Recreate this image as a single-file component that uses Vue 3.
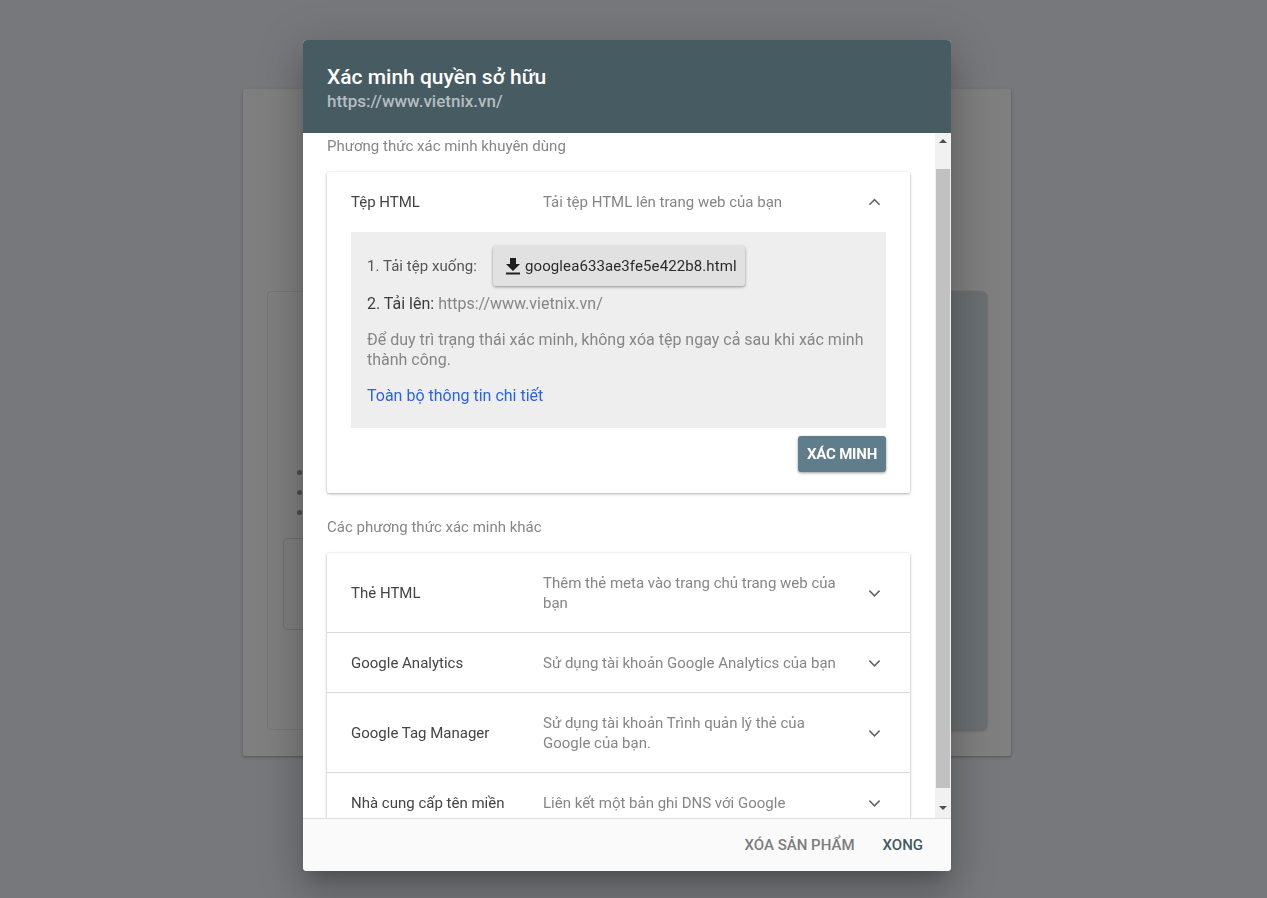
<script setup>
const rows = [
  { name: 'Thẻ HTML', desc: 'Thêm thẻ meta vào trang chủ trang web của bạn', h: 'tall' },
  { name: 'Google Analytics', desc: 'Sử dụng tài khoản Google Analytics của bạn', h: 'short' },
  { name: 'Google Tag Manager', desc: 'Sử dụng tài khoản Trình quản lý thẻ của Google của bạn.', h: 'tall' },
  { name: 'Nhà cung cấp tên miền', desc: 'Liên kết một bản ghi DNS với Google', h: 'short' }
]
</script>

<template>
  <div class="page">
    <div class="bg-card">
      <div class="bg-split">
        <div class="bg-left">
          <ul class="bg-list"><li></li><li></li><li></li></ul>
          <div class="bg-box"></div>
        </div>
        <div class="bg-right"></div>
      </div>
    </div>

    <div class="modal">
      <header class="head">
        <div class="title">Xác minh quyền sở hữu</div>
        <div class="sub">https://www.vietnix.vn/</div>
      </header>

      <div class="middle">
        <div class="content">
          <div class="label first">Phương thức xác minh khuyên dùng</div>
          <section class="card open">
            <div class="row-open">
              <span class="name">Tệp HTML</span>
              <span class="desc">Tải tệp HTML lên trang web của bạn</span>
              <svg class="chev" viewBox="0 0 14 8"><path d="M1.5 7 7 1.5 12.5 7" /></svg>
            </div>
            <div class="panel">
              <div class="step1">
                <span class="step-text">1. Tải tệp xuống:</span>
                <button class="dl" type="button">
                  <svg class="dl-ico" viewBox="0 0 16 18"><path d="M5 1h6v6h4l-7 7-7-7h4z M1 15.6h14V17.4H1z" /></svg>
                  <span>googlea633ae3fe5e422b8.html</span>
                </button>
              </div>
              <div class="step2"><span class="dark">2. Tải lên:</span> https://www.vietnix.vn/</div>
              <p class="note">Để duy trì trạng thái xác minh, không xóa tệp ngay cả sau khi xác minh thành công.</p>
              <a class="link">Toàn bộ thông tin chi tiết</a>
            </div>
            <div class="actions"><button class="verify" type="button">XÁC MINH</button></div>
          </section>

          <div class="label second">Các phương thức xác minh khác</div>
          <section class="card list">
            <div v-for="r in rows" :key="r.name" class="row" :class="r.h">
              <span class="name">{{ r.name }}</span>
              <span class="desc">{{ r.desc }}</span>
              <svg class="chev" viewBox="0 0 14 8"><path d="M1.5 1.5 7 7 12.5 1.5" /></svg>
            </div>
          </section>
        </div>
        <div class="scrollbar">
          <div class="arrow"><svg viewBox="0 0 8 4"><path d="M0 4 4 0l4 4z" /></svg></div>
          <div class="track"><div class="thumb"></div></div>
          <div class="arrow"><svg viewBox="0 0 8 4"><path d="M0 0h8L4 4z" /></svg></div>
        </div>
      </div>

      <footer class="foot">
        <button class="text-btn muted" type="button">XÓA SẢN PHẨM</button>
        <button class="text-btn strong" type="button">XONG</button>
      </footer>
    </div>
  </div>
</template>

<style>
html, body { margin: 0; background: #77787b; }
</style>

<style scoped>
.page {
  width: 1267px;
  height: 898px;
  box-sizing: border-box;
  padding: 89px 256px 0 243px;
  background: #77787b;
  font-family: Roboto, "Noto Sans", sans-serif;
  overflow: hidden;
}
.bg-card {
  width: 768px;
  height: 667px;
  box-sizing: border-box;
  padding: 202px 24px 0;
  background: #7f7f7f;
  box-shadow: 0 1px 3px rgba(0, 0, 0, .3);
  border-radius: 2px;
}
.bg-split { display: flex; height: 439px; }
.bg-left {
  width: 400px;
  flex: none;
  box-sizing: border-box;
  padding-top: 178px;
  padding-left: 15px;
  border: 1px solid #757575;
  border-right: 0;
  border-radius: 4px 0 0 4px;
}
.bg-list { list-style: none; margin: 0; padding: 0 0 0 14px; }
.bg-list li { width: 5px; height: 5px; margin-bottom: 15px; border-radius: 50%; background: #4d4d4d; }
.bg-box {
  width: 688px;
  height: 92px;
  margin-top: 23px;
  box-sizing: border-box;
  border: 1px solid #6f7072;
  border-radius: 4px;
}
.bg-right {
  flex: 1;
  background: #6a6f71;
  border-radius: 0 6px 6px 0;
  box-shadow: 0 1px 3px rgba(0, 0, 0, .25);
}

.modal {
  position: fixed;
  left: 303px;
  top: 40px;
  width: 648px;
  height: 831px;
  display: flex;
  flex-direction: column;
  background: #fff;
  border-radius: 4px;
  box-shadow: 0 11px 15px -7px rgba(0, 0, 0, .2), 0 24px 38px 3px rgba(0, 0, 0, .14), 0 9px 46px 8px rgba(0, 0, 0, .12);
  overflow: hidden;
}
.head {
  height: 93px;
  flex: none;
  box-sizing: border-box;
  padding: 24px 24px 0;
  background: #475b63;
}
.title { font-size: 21px; font-weight: 500; line-height: 26px; color: #fff; }
.sub { font-size: 17px; font-weight: 500; line-height: 22px; color: #b4bdc1; }

.middle { flex: 1; min-height: 0; display: flex; }
.content { flex: 1; min-width: 0; padding: 0 25px 0 24px; overflow: hidden; }
.label { font-size: 15px; line-height: 20px; color: #868686; }
.label.first { margin-top: 3px; }
.label.second { margin-top: 24px; }

.card {
  background: #fff;
  border-radius: 2px;
  box-shadow: 0 1px 3px rgba(0, 0, 0, .3), 0 0 2px rgba(0, 0, 0, .08);
}
.card.open { margin-top: 16px; height: 321px; box-sizing: border-box; padding: 0 24px; }
.row-open { height: 60px; display: flex; align-items: center; }
.name { width: 192px; flex: none; font-size: 15px; line-height: 20px; color: #444; }
.desc { width: 300px; flex: none; font-size: 15px; line-height: 20px; color: #868686; }
.chev { width: 13px; height: 8px; margin-left: 25px; flex: none; fill: none; stroke: #666; stroke-width: 1.7; }

.panel {
  height: 196px;
  box-sizing: border-box;
  padding: 14px 16px 0;
  background: #eee;
  font-size: 16px;
  line-height: 20px;
  color: #868686;
}
.step1 { display: flex; align-items: center; }
.step-text { width: 126px; flex: none; font-size: 15px; letter-spacing: .05px; color: #555; }
.dl {
  height: 40px;
  width: 252px;
  display: flex;
  align-items: center;
  gap: 4px;
  box-sizing: border-box;
  padding: 0 0 0 12px;
  border: 0;
  border-radius: 3px;
  background: #e1e1e1;
  color: #2b2b2b;
  font: 15px Roboto, sans-serif;
  letter-spacing: .1px;
  box-shadow: 0 1px 3px rgba(0, 0, 0, .4);
}
.dl-ico { width: 16px; height: 18px; fill: #1f1f1f; }
.step2 { margin-top: 8px; }
.dark { color: #3c3c3c; }
.note { margin: 16px 0 0; }
.link { display: block; margin-top: 16px; color: #2a64e0; }
.actions { display: flex; justify-content: flex-end; margin-top: 8px; }
.verify {
  width: 88px;
  height: 36px;
  padding: 0;
  border: 0;
  border-radius: 3px;
  background: #607d8b;
  color: #fff;
  font: 700 15px Roboto, sans-serif;
  letter-spacing: -.2px;
  box-shadow: 0 1px 3px rgba(0, 0, 0, .4);
}
.card.list { margin-top: 16px; }
.row { display: flex; align-items: center; box-sizing: border-box; padding: 0 24px; border-bottom: 1px solid #d9d9d9; }
.row.tall { height: 80px; }
.row.short { height: 60px; }
.row:last-child { border-bottom: 0; }

.scrollbar { width: 16px; flex: none; box-sizing: border-box; padding-bottom: 2px; display: flex; flex-direction: column; background: #f1f1f1; }
.arrow { height: 16px; flex: none; display: flex; align-items: center; justify-content: center; }
.arrow svg { width: 8px; height: 4px; fill: #505050; }
.track { flex: 1; padding: 20px 1px 12px; }
.thumb { height: 100%; background: #c1c1c1; }

.foot {
  height: 53px;
  flex: none;
  box-sizing: border-box;
  display: flex;
  justify-content: flex-end;
  align-items: center;
  gap: 28px;
  padding-right: 28px;
  background: #fafafa;
  border-top: 1px solid #e0e0e0;
}
.text-btn { padding: 0; border: 0; background: none; font: 500 15px Roboto, sans-serif; }
.muted { color: #7d7d7d; }
.strong { color: #455a64; }
</style>
